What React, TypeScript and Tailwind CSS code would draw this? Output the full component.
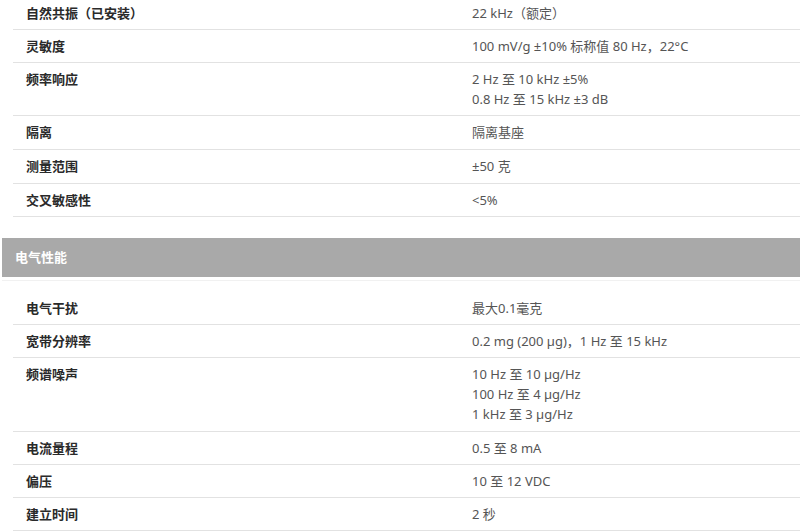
import React from "react";

type Row = { label: string; values: string[]; tall?: boolean };

const table1: Row[] = [
  { label: "自然共振（已安装）", values: ["22 kHz（额定）"] },
  { label: "灵敏度", values: ["100 mV/g ±10% 标称值 80 Hz，22°C"] },
  { label: "频率响应", values: ["2 Hz 至 10 kHz ±5%", "0.8 Hz 至 15 kHz ±3 dB"] },
  { label: "隔离", values: ["隔离基座"], tall: true },
  { label: "测量范围", values: ["±50 克"], tall: true },
  { label: "交叉敏感性", values: ["<5%"] },
];

const table2: Row[] = [
  { label: "电气干扰", values: ["最大0.1毫克"] },
  { label: "宽带分辨率", values: ["0.2 mg (200 µg)，1 Hz 至 15 kHz"] },
  { label: "频谱噪声", values: ["10 Hz 至 10 µg/Hz", "100 Hz 至 4 µg/Hz", "1 kHz 至 3 µg/Hz"], tall: true },
  { label: "电流量程", values: ["0.5 至 8 mA"] },
  { label: "偏压", values: ["10 至 12 VDC"] },
  { label: "建立时间", values: ["2 秒"] },
];

function SpecRow({ row }: { row: Row }) {
  return (
    <div
      className={
        row.tall
          ? "flex border-b border-[#e2e2e2] pt-[6px] pb-[7px] leading-[20px]"
          : "flex border-b border-[#e2e2e2] py-[6px] leading-[20px]"
      }
    >
      <div className="w-[459px] shrink-0 pl-[13px] font-bold text-[#2a2a2a]">{row.label}</div>
      <div className="flex-1 text-[#555555]">
        {row.values.map((v, i) => (
          <div key={i}>{v}</div>
        ))}
      </div>
    </div>
  );
}

export default function App() {
  return (
    <div
      className="h-[531px] w-[800px] overflow-hidden bg-white text-[13px]"
      style={{ fontFamily: '"Noto Sans", "Noto Sans CJK SC", sans-serif' }}
    >
      <div className="-mt-[3px] ml-[13px]">
        {table1.map((r) => (
          <SpecRow key={r.label} row={r} />
        ))}
      </div>
      <div className="ml-[2px] mt-[21px] flex h-[39px] items-center bg-[#a9a9a9] pl-[13px] font-bold text-white">
        电气性能
      </div>
      <div className="ml-[2px] mt-[3px] h-px bg-[#f1f1f1]" />
      <div className="ml-[13px] mt-[11px]">
        {table2.map((r) => (
          <SpecRow key={r.label} row={r} />
        ))}
      </div>
    </div>
  );
}
